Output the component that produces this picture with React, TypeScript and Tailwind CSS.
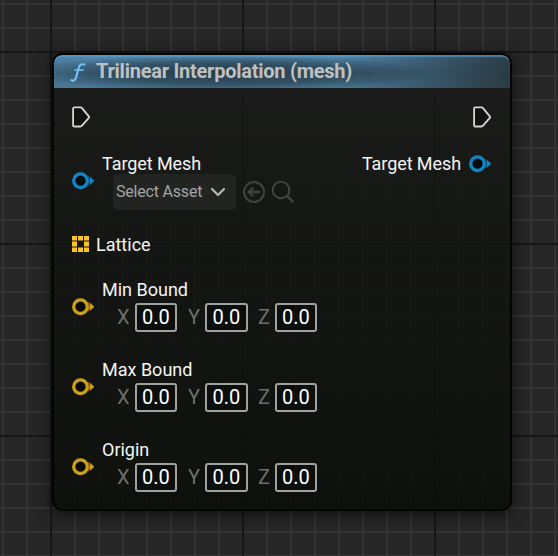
import React from "react";

const GRID =
  "bg-[#262626] bg-[linear-gradient(to_right,#161616_2px,transparent_2px),linear-gradient(to_bottom,#161616_2px,transparent_2px),linear-gradient(to_right,#343434_2px,transparent_2px),linear-gradient(to_bottom,#343434_2px,transparent_2px)] bg-[size:192px_192px,192px_192px,24px_24px,24px_24px] bg-[position:50px_51px,50px_51px,2px_3px,2px_3px]";

function ExecPin() {
  return (
    <svg className="block shrink-0" width="19" height="24" viewBox="0 0 19 24" fill="#101110" stroke="#d6d6d4" strokeWidth="1.8" strokeLinejoin="round">
      <path d="M2.2 2.4H8.4Q9.3 2.4 10 3.1L17 11.6Q17.5 12.1 17 12.7L10 20.7Q9.3 21.5 8.4 21.5H2.2Q1.1 21.5 1.1 20.4V3.5Q1.1 2.4 2.2 2.4Z" />
    </svg>
  );
}

function Pin({ color }: { color: string }) {
  return (
    <svg className="block shrink-0" width="23" height="18" viewBox="0 0 23 18">
      <circle cx="8.5" cy="8.7" r="6.8" fill="#080b0b" stroke={color} strokeWidth="3.3" />
      <path d="M17.8 4.4L22.3 8.7L17.8 13Z" fill={color} />
      <path d="M16 4.2Q18.6 8.7 16 13.2" fill="none" stroke={color} strokeWidth="1.4" opacity="0.6" />
    </svg>
  );
}

function ArrayPin() {
  return (
    <svg className="block shrink-0" width="18" height="17" viewBox="0 0 18 17" fill="#fdc426">
      <path d="M0 0H5V4.5H0ZM6 0H11V4.5H6ZM12 0H17V4.5H12ZM0 5.5H5V10.5H0ZM12 5.5H17V10.5H12ZM0 11.5H5V16H0ZM6 11.5H11V16H6ZM12 11.5H17V16H12Z" />
    </svg>
  );
}

function Axis({ name, cls, box }: { name: string; cls: string; box: string }) {
  return (
    <div className="flex items-center">
      <span className={`text-[20px] leading-[29px] text-[#6d6f6d] ${cls}`}>{name}</span>
      <span className={`flex h-[29px] items-center justify-center rounded-[3px] border-2 border-[#a0a29f] bg-[#0c0e0c] pb-px text-[20px] leading-none text-white ${box}`}>
        0.0
      </span>
    </div>
  );
}

function VectorRow({ label }: { label: string }) {
  return (
    <div className="flex h-20 shrink-0">
      <div className="w-[30px] shrink-0 pt-5">
        <Pin color="#cf9f1c" />
      </div>
      <div>
        <div className="h-[25px] text-[18px] leading-6 text-[#f5f5f5]">{label}</div>
        <div className="flex pl-[15px]">
          <Axis name="X" cls="w-[18px]" box="w-[42px]" />
          <Axis name="Y" cls="w-[28px] pl-[11px]" box="w-[43px]" />
          <Axis name="Z" cls="w-[27px] pl-[10px]" box="w-[42px]" />
        </div>
      </div>
    </div>
  );
}

export default function App() {
  return (
    <div className={`h-[556px] w-[558px] overflow-hidden pl-[52px] pt-[53px] font-[Roboto,sans-serif] ${GRID}`}>
      <div className="h-[458px] w-[460px] overflow-hidden rounded-[10px] border-2 border-black/80 bg-[linear-gradient(to_bottom,rgba(26,27,26,0.87),rgba(20,22,19,0.87)_30%,rgba(12,14,10,0.9))] shadow-[0_3px_14px_2px_rgba(0,0,0,0.5)]">
        <header className="flex h-[33px] items-center rounded-t-[8px] bg-[linear-gradient(to_right,transparent_62%,rgba(32,39,42,0.75)_100%),radial-gradient(ellipse_45%_55%_at_38%_55%,rgba(30,46,56,0.8),rgba(30,46,56,0.5)_60%,transparent),linear-gradient(to_bottom,#528bb3,#4c7b9d_20%,#45718d_55%,#4a7896)] pl-4 shadow-[inset_0_2px_1px_rgba(91,155,201,0.65)]">
          <svg className="mr-[9px] shrink-0" width="17" height="22" viewBox="0 0 17 22" fill="none" stroke="#71c4ff" strokeLinecap="round">
            <path d="M1.3 19.2C3.4 20.4 5.3 19.2 6.1 16.4L8.8 6.4C9.5 3.7 11.4 2.8 14.4 3.6" strokeWidth="2.1" />
            <path d="M4.6 9H13.2" strokeWidth="1.5" />
          </svg>
          <h1 className="whitespace-nowrap text-[20px] font-bold leading-[33px] tracking-[-0.25px] text-[#bfc1c1]">Trilinear Interpolation (mesh)</h1>
        </header>
        <main className="flex justify-between px-[18px]">
          <div className="flex flex-col">
            <div className="h-16 pt-[17px]">
              <ExecPin />
            </div>
            <div className="flex h-[81px]">
              <div className="w-[30px] shrink-0 pt-5">
                <Pin color="#0f85c6" />
              </div>
              <div>
                <div className="h-[22px] text-[18px] leading-6 tracking-[-0.08px] text-[#f5f5f5]">Target Mesh</div>
                <div className="flex items-center pl-[11px]">
                  <div className="flex h-9 w-[123px] items-center rounded-[5px] bg-[#222422] pl-[3px]">
                    <span className="whitespace-nowrap text-[16px] tracking-[-0.2px] text-[#a3a4a3]">Select Asset</span>
                    <svg className="ml-2 shrink-0" width="16" height="10" viewBox="0 0 16 10" fill="none" stroke="#b8b9b8" strokeWidth="2.2" strokeLinecap="round" strokeLinejoin="round">
                      <path d="M2 2L8 8L14 2" />
                    </svg>
                  </div>
                  <svg className="ml-[7px]" width="23" height="24" viewBox="0 0 23 24" fill="none" stroke="#414341" strokeWidth="2" strokeLinecap="round" strokeLinejoin="round">
                    <circle cx="11" cy="12" r="10" />
                    <path d="M16.4 12H6M9.5 8.2L5.7 12L9.5 15.8" strokeWidth="2.3" />
                  </svg>
                  <svg className="ml-[5px]" width="24" height="24" viewBox="0 0 24 24" fill="none" stroke="#414341" strokeWidth="2" strokeLinecap="round">
                    <circle cx="10" cy="10" r="8.3" />
                    <path d="M16.2 16.2L21.5 21.5" strokeWidth="2.5" />
                  </svg>
                </div>
              </div>
            </div>
            <div className="flex h-[45px] items-start">
              <div className="w-6 pt-[3px]">
                <ArrayPin />
              </div>
              <div className="text-[18px] leading-6 text-[#f5f5f5]">Lattice</div>
            </div>
            <VectorRow label="Min Bound" />
            <VectorRow label="Max Bound" />
            <VectorRow label="Origin" />
          </div>
          <div className="flex flex-col items-end">
            <div className="h-16 pt-[17px]">
              <ExecPin />
            </div>
            <div className="flex items-center">
              <span className="mr-2 text-[18px] leading-6 tracking-[-0.08px] text-[#f5f5f5]">Target Mesh</span>
              <div className="-mt-px">
                <Pin color="#0f85c6" />
              </div>
            </div>
          </div>
        </main>
      </div>
    </div>
  );
}
